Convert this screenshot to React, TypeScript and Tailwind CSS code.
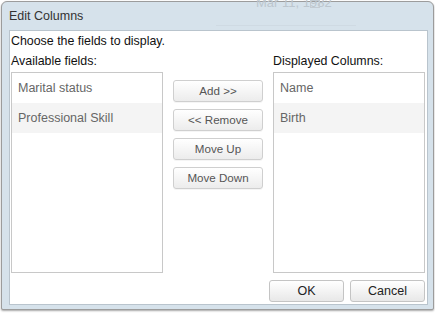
import React from "react";

const font = { fontFamily: '"Liberation Sans", Arial, sans-serif' };

function ListBox({ items }: { items: string[] }) {
  return (
    <div className="w-[152px] h-[201px] border border-[#c8c8c8] bg-white">
      {items.map((t, i) => (
        <div
          key={t}
          className={`h-[30px] pl-[6px] flex items-center text-[12.5px] text-[#666] ${
            i % 2 === 1 ? "bg-[#f4f4f4]" : "bg-white"
          }`}
        >
          {t}
        </div>
      ))}
    </div>
  );
}

function SmallBtn({ label }: { label: string }) {
  return (
    <button className="w-[90px] h-[22px] rounded-[3px] border border-[#cfcfcf] bg-gradient-to-b from-white to-[#ececec] text-[11.6px] text-[#555] flex items-center justify-center shadow-[0_1px_0_rgba(0,0,0,0.04)]">
      {label}
    </button>
  );
}

function BigBtn({ label }: { label: string }) {
  return (
    <button className="w-[75px] h-[22px] rounded-[3px] border border-[#c4c4c4] bg-gradient-to-b from-white to-[#e8e8e8] text-[12.5px] text-[#222] flex items-center justify-center">
      {label}
    </button>
  );
}

export default function App() {
  return (
    <div className="w-[435px] h-[313px] bg-white overflow-hidden" style={font}>
      <div className="relative ml-[1px] mt-[1px] w-[433px] h-[309px] rounded-t-[6px] rounded-b-[2px] border border-[#9c9c9c] bg-[#d6e2eb] shadow-[0_1px_2px_rgba(0,0,0,0.35)] flex flex-col pl-[7px] pr-[5px] pb-[4px]">
        {/* faint content seen through the translucent frame */}
        <div className="absolute left-[254px] top-[-9px] text-[13px] text-[#bcc6ce] pointer-events-none">
          Mar 11, 1982
        </div>
        <div className="absolute left-[308px] top-[-2px] w-[10px] h-[8px] border border-[#c3cbd2] pointer-events-none" />
        <div className="absolute left-[214px] top-[23px] w-[140px] h-px bg-[#cfdae3] pointer-events-none" />
        <div className="h-[28px] flex items-center text-[12.5px] text-[#333]">
          Edit Columns
        </div>
        <div className="flex-1 bg-white border border-[#b9c4cd] pl-[1px] flex flex-col text-[12.4px] text-[#111]">
          <div className="h-[20px] leading-[20px]">Choose the fields to display.</div>
          <div className="flex gap-[10px]">
            <div className="flex flex-col">
              <div className="h-[20px] leading-[20px]">Available fields:</div>
              <div className="mt-[1px]">
                <ListBox items={["Marital status", "Professional Skill"]} />
              </div>
            </div>
            <div className="flex flex-col gap-[7px] pt-[29px]">
              <SmallBtn label="Add >>" />
              <SmallBtn label="<< Remove" />
              <SmallBtn label="Move Up" />
              <SmallBtn label="Move Down" />
            </div>
            <div className="flex flex-col">
              <div className="h-[20px] leading-[20px]">Displayed Columns:</div>
              <div className="mt-[1px]">
                <ListBox items={["Name", "Birth"]} />
              </div>
            </div>
          </div>
          <div className="flex justify-end gap-[6px] mt-[7px] pr-[2px]">
            <BigBtn label="OK" />
            <BigBtn label="Cancel" />
          </div>
        </div>
      </div>
    </div>
  );
}
